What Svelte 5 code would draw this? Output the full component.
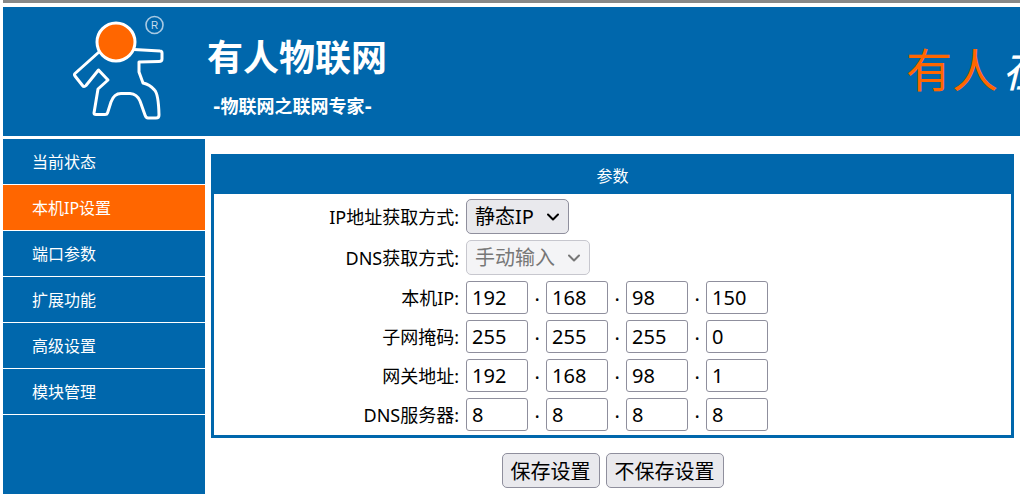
<script>
  const menu = ['当前状态', '本机IP设置', '端口参数', '扩展功能', '高级设置', '模块管理'];
  let active = $state(1);

  const selects = [
    { id: 'ip-mode', label: 'IP地址获取方式:', value: '静态IP', disabled: false },
    { id: 'dns-mode', label: 'DNS获取方式:', value: '手动输入', disabled: true }
  ];

  const addresses = $state([
    { id: 'local-ip', label: '本机IP:', parts: ['192', '168', '98', '150'] },
    { id: 'mask', label: '子网掩码:', parts: ['255', '255', '255', '0'] },
    { id: 'gateway', label: '网关地址:', parts: ['192', '168', '98', '1'] },
    { id: 'dns', label: 'DNS服务器:', parts: ['8', '8', '8', '8'] }
  ]);
</script>

<div class="page">
  <header>
    <svg class="logo" viewBox="0 0 100 110" width="100" height="110" aria-hidden="true">
      <g fill="none" stroke="#fff" stroke-width="3" stroke-linejoin="round" stroke-linecap="round">
        <path d="M29 42 L5 63.500 Q4 64.500 5 66 L12.500 75.500 Q14 77.500 16 75.500 L28.500 60 L38 70 L28 79 L24 103 Q24 104.500 26 104.500 L35 104.500 Q37 104.500 37.500 103 L41 92 Q44 83.500 51 83.500 L60 83.500 Q67 84 70 91 L75 105 Q76 108 78 108 L86 108 Q89 108 89 105 Q88.500 84 84.500 80 Q80 74.500 73 73 L69 62 L69 52 L89 51.500 Q92 51.500 92 49 L92 43 Q92 41 90 41 L64 39.500" />
        <circle cx="46" cy="32" r="19" fill="#ff6600" />
      </g>
      <circle cx="84.500" cy="15" r="8.500" fill="none" stroke="#a9cae3" stroke-width="1.600" />
      <text x="84.500" y="18.500" text-anchor="middle" font-size="10" fill="#c9deee">R</text>
    </svg>
    <div class="brand">
      <h1>有人物联网</h1>
      <p>-物联网之联网专家-</p>
    </div>
    <div class="slogan"><span>有人</span>在</div>
  </header>

  <div class="body">
    <nav>
      {#each menu as item, i}
        <a href="#menu-{i}" class:active={i === active} onclick={() => (active = i)}>{item}</a>
      {/each}
    </nav>

    <main>
      <form onsubmit={(e) => e.preventDefault()}>
        <section>
          <h2>参数</h2>
          <div class="fields">
            {#each selects as s}
              <div class="row tall">
                <label for={s.id}>{s.label}</label>
                <div class="select" class:disabled={s.disabled}>
                  <select id={s.id} disabled={s.disabled}>
                    <option>{s.value}</option>
                  </select>
                  <svg viewBox="0 0 12 8" width="12" height="8" aria-hidden="true">
                    <path d="M1 1.500 L6 6.500 L11 1.500" fill="none" stroke="currentColor" stroke-width="2" stroke-linecap="round" stroke-linejoin="round" />
                  </svg>
                </div>
              </div>
            {/each}
            {#each addresses as a}
              <div class="row">
                <label for="{a.id}-0">{a.label}</label>
                <div class="octets">
                  {#each a.parts as _, i}
                    {#if i > 0}<span class="dot">.</span>{/if}
                    <input id="{a.id}-{i}" type="text" maxlength="3" aria-label="{a.label} {i + 1}" bind:value={a.parts[i]} />
                  {/each}
                </div>
              </div>
            {/each}
          </div>
        </section>
        <div class="actions">
          <button type="submit">保存设置</button>
          <button type="reset">不保存设置</button>
        </div>
      </form>
    </main>
  </div>
</div>

<style>
  :global(body) {
    margin: 0;
    background: #fff;
  }
  .page {
    box-sizing: border-box;
    min-height: 100vh;
    display: flex;
    flex-direction: column;
    gap: 3px;
    padding-left: 3px;
    overflow: hidden;
    font-family: 'Noto Sans', 'Noto Sans CJK SC', sans-serif;
    font-size: 16px;
    color: #000;
  }
  header {
    display: flex;
    height: 129px;
    margin-top: 4px;
    background: #0067ac;
    color: #fff;
    white-space: nowrap;
  }
  .page::before {
    content: '';
    height: 3px;
    margin-bottom: -3px;
    background: #888;
  }
  .logo {
    flex: none;
    margin: 3px 0 0 67px;
    font-family: 'Liberation Sans', sans-serif;
  }
  .brand {
    flex: 1;
    margin-left: 37px;
    padding-top: 26px;
    font-family: 'DejaVu Sans', 'Noto Sans CJK SC', sans-serif;
    font-weight: 700;
  }
  h1 {
    margin: 0;
    font-size: 36px;
    line-height: 52px;
  }
  .brand p {
    margin: 8px 0 0 6px;
    font-size: 18px;
    line-height: 28px;
  }
  .slogan {
    flex: none;
    width: 114px;
    padding-top: 28px;
    overflow: hidden;
    font-family: 'Noto Sans CJK SC', sans-serif;
    font-weight: 400;
    font-size: 46px;
    line-height: 64px;
    font-style: italic;
  }
  .slogan span {
    margin-right: 4px;
    color: #ff6600;
    font-style: normal;
  }
  .body {
    flex: 1;
    display: flex;
    gap: 6px;
  }
  nav {
    flex: none;
    width: 202px;
    background: #0067ac;
  }
  nav a {
    display: block;
    padding: 2px 0 0 29px;
    border-bottom: 1px solid #fff;
    line-height: 43px;
    color: #fff;
    text-decoration: none;
  }
  nav a.active {
    background: #ff6600;
  }
  main {
    flex: 1;
    padding: 15px 6px 0 0;
  }
  section {
    border: 3px solid #0067ac;
  }
  h2 {
    margin: 0;
    padding-top: 2px;
    background: #0067ac;
    color: #fff;
    font-size: 16px;
    font-weight: 400;
    line-height: 35px;
    text-align: center;
  }
  .fields {
    padding: 2px 0 1px;
  }
  .row {
    display: grid;
    grid-template-columns: 31% 1fr;
    column-gap: 5px;
    align-items: center;
    height: 39px;
  }
  .row.tall {
    height: 41px;
  }
  label {
    padding: 0 2px 0 0;
    font-size: 18px;
    line-height: 24px;
    text-align: right;
    white-space: nowrap;
  }
  .select {
    display: grid;
    justify-content: start;
    align-items: center;
  }
  select,
  .select svg {
    grid-area: 1 / 1;
  }
  .select svg {
    justify-self: end;
    margin-right: 10px;
    pointer-events: none;
  }
  select,
  input,
  button {
    box-sizing: border-box;
    margin: 0;
    border: 1px solid #8f8f9d;
    font-family: 'Noto Sans', 'Noto Sans CJK SC', sans-serif;
    font-size: 20px;
    color: #000;
  }
  select {
    appearance: none;
    height: 35px;
    padding: 0 34px 0 8px;
    border-radius: 5px;
    background: #e9e9ed;
  }
  .disabled {
    color: #777;
  }
  .disabled select {
    border-color: #c7c7ce;
    background: #f4f4f6;
    color: #777;
    opacity: 1;
  }
  .octets {
    display: flex;
  }
  input {
    width: 62px;
    height: 33px;
    padding: 0 5px;
    border-radius: 3px;
    background: #fff;
  }
  .dot {
    width: 18px;
    font-size: 20px;
    line-height: 25px;
    text-align: center;
  }
  .actions {
    display: flex;
    justify-content: center;
    gap: 6px;
    padding-top: 15px;
  }
  button {
    height: 35px;
    padding: 0 8px;
    border-radius: 5px;
    background: #e9e9ed;
  }
</style>
